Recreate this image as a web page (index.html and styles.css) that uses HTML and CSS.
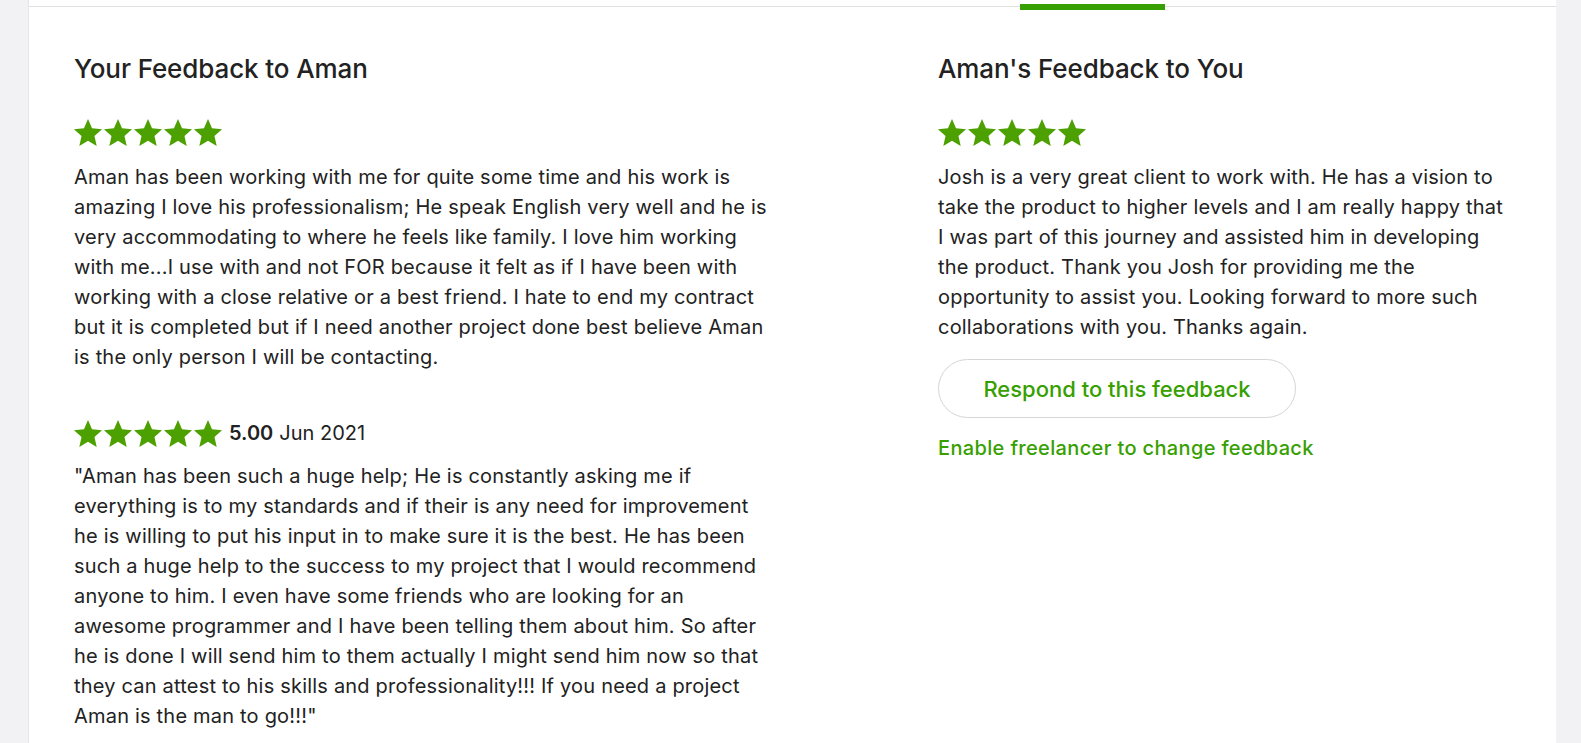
FILE: index.html
```html
<!DOCTYPE html>
<html lang="en">
<head>
<meta charset="utf-8">
<title>Feedback</title>
<link rel="stylesheet" href="styles.css">
</head>
<body>
<div class="panel">
  <div class="tabs"><div class="tab-active"></div></div>
  <div class="columns">
    <section class="col col-left">
      <h2 class="title">Your Feedback to Aman</h2>
      <div class="stars stars-top">
        <svg viewBox="1.2 1.5 21.6 20.5" preserveAspectRatio="none"><polygon points="12,1.5 15.1,8.6 22.8,9.3 17,14.4 18.7,22 12,18 5.3,22 7,14.4 1.2,9.3 8.9,8.6"/></svg>
        <svg viewBox="1.2 1.5 21.6 20.5" preserveAspectRatio="none"><polygon points="12,1.5 15.1,8.6 22.8,9.3 17,14.4 18.7,22 12,18 5.3,22 7,14.4 1.2,9.3 8.9,8.6"/></svg>
        <svg viewBox="1.2 1.5 21.6 20.5" preserveAspectRatio="none"><polygon points="12,1.5 15.1,8.6 22.8,9.3 17,14.4 18.7,22 12,18 5.3,22 7,14.4 1.2,9.3 8.9,8.6"/></svg>
        <svg viewBox="1.2 1.5 21.6 20.5" preserveAspectRatio="none"><polygon points="12,1.5 15.1,8.6 22.8,9.3 17,14.4 18.7,22 12,18 5.3,22 7,14.4 1.2,9.3 8.9,8.6"/></svg>
        <svg viewBox="1.2 1.5 21.6 20.5" preserveAspectRatio="none"><polygon points="12,1.5 15.1,8.6 22.8,9.3 17,14.4 18.7,22 12,18 5.3,22 7,14.4 1.2,9.3 8.9,8.6"/></svg>
      </div>
      <p class="text text-left">Aman has been working with me for quite some time and his work is amazing I love his professionalism; He speak English very well and he is very accommodating to where he feels like family. I love him working with&nbsp;me...I use with and not FOR because it felt as if I have been with working with a close relative or a best friend. I hate to end my contract but it is completed but if I need another project done best believe Aman is&nbsp;the only person I will be contacting.</p>
      <div class="rating-row">
        <div class="stars">
          <svg viewBox="1.2 1.5 21.6 20.5" preserveAspectRatio="none"><polygon points="12,1.5 15.1,8.6 22.8,9.3 17,14.4 18.7,22 12,18 5.3,22 7,14.4 1.2,9.3 8.9,8.6"/></svg>
          <svg viewBox="1.2 1.5 21.6 20.5" preserveAspectRatio="none"><polygon points="12,1.5 15.1,8.6 22.8,9.3 17,14.4 18.7,22 12,18 5.3,22 7,14.4 1.2,9.3 8.9,8.6"/></svg>
          <svg viewBox="1.2 1.5 21.6 20.5" preserveAspectRatio="none"><polygon points="12,1.5 15.1,8.6 22.8,9.3 17,14.4 18.7,22 12,18 5.3,22 7,14.4 1.2,9.3 8.9,8.6"/></svg>
          <svg viewBox="1.2 1.5 21.6 20.5" preserveAspectRatio="none"><polygon points="12,1.5 15.1,8.6 22.8,9.3 17,14.4 18.7,22 12,18 5.3,22 7,14.4 1.2,9.3 8.9,8.6"/></svg>
          <svg viewBox="1.2 1.5 21.6 20.5" preserveAspectRatio="none"><polygon points="12,1.5 15.1,8.6 22.8,9.3 17,14.4 18.7,22 12,18 5.3,22 7,14.4 1.2,9.3 8.9,8.6"/></svg>
        </div>
        <span class="score">5.00</span>
        <span class="date">Jun 2021</span>
      </div>
      <p class="text text-left quote">"Aman has been such a huge help; He is constantly asking me if everything is to my standards and if their is any need for improvement he&nbsp;is willing to put his input in to make sure it is the best. He has been such a huge help to the success to my project that I would recommend anyone to him. I even have some friends who are looking for an awesome&nbsp;programmer and I have been telling them about him. So after he&nbsp;is done I will send him to them actually I might send him now so that they can attest to his skills and professionality!!! If you need a project Aman is the man to go!!!"</p>
    </section>
    <section class="col col-right">
      <h2 class="title">Aman's Feedback to You</h2>
      <div class="stars stars-top">
        <svg viewBox="1.2 1.5 21.6 20.5" preserveAspectRatio="none"><polygon points="12,1.5 15.1,8.6 22.8,9.3 17,14.4 18.7,22 12,18 5.3,22 7,14.4 1.2,9.3 8.9,8.6"/></svg>
        <svg viewBox="1.2 1.5 21.6 20.5" preserveAspectRatio="none"><polygon points="12,1.5 15.1,8.6 22.8,9.3 17,14.4 18.7,22 12,18 5.3,22 7,14.4 1.2,9.3 8.9,8.6"/></svg>
        <svg viewBox="1.2 1.5 21.6 20.5" preserveAspectRatio="none"><polygon points="12,1.5 15.1,8.6 22.8,9.3 17,14.4 18.7,22 12,18 5.3,22 7,14.4 1.2,9.3 8.9,8.6"/></svg>
        <svg viewBox="1.2 1.5 21.6 20.5" preserveAspectRatio="none"><polygon points="12,1.5 15.1,8.6 22.8,9.3 17,14.4 18.7,22 12,18 5.3,22 7,14.4 1.2,9.3 8.9,8.6"/></svg>
        <svg viewBox="1.2 1.5 21.6 20.5" preserveAspectRatio="none"><polygon points="12,1.5 15.1,8.6 22.8,9.3 17,14.4 18.7,22 12,18 5.3,22 7,14.4 1.2,9.3 8.9,8.6"/></svg>
      </div>
      <p class="text text-right">Josh is a very great client to work with. He has a vision to take the product to higher levels and I am really happy that I was part of this journey and assisted him in developing the product. Thank you Josh for providing me the opportunity to assist you. Looking forward to more such collaborations with you. Thanks again.</p>
      <button class="btn" type="button">Respond to this feedback</button>
      <a class="link" href="#">Enable freelancer to change feedback</a>
    </section>
  </div>
</div>
</body>
</html>
```

FILE: styles.css
```css
* { box-sizing: border-box; }
html, body { margin: 0; padding: 0; }
body {
  background: #f2f2f4;
  font-family: Inter, "Liberation Sans", Arial, sans-serif;
  color: #222222;
  height: 743px;
  overflow: hidden;
}
.panel {
  margin-left: 28px;
  width: 1528px;
  min-height: 743px;
  background: #ffffff;
  border-left: 1px solid #e4e5e7;
}
.tabs {
  display: flex;
  height: 7px;
  border-bottom: 1px solid #e0e0e0;
}
.tab-active {
  margin-left: 991px;
  margin-top: 4px;
  width: 145px;
  height: 6px;
  flex: none;
  background: #37a000;
}
.columns {
  display: flex;
  padding: 46px 46px 0 45px;
}
.col-left { width: 864px; flex: none; }
.col-right { width: 572px; flex: none; }
.title {
  margin: 0;
  font-size: 26px;
  line-height: 32px;
  font-weight: 500;
  letter-spacing: -0.1px;
}
.stars { display: flex; gap: 2px; }
.stars svg { width: 28px; height: 27px; fill: #4ca000; display: block; }
.stars-top { margin-top: 34px; }
.text {
  margin: 16px 0 0;
  font-size: 20px;
  line-height: 30px;
  letter-spacing: 0.2px;
}
.text-left { max-width: 708px; }
.text-right { max-width: 566px; }
.rating-row {
  display: flex;
  align-items: center;
  margin-top: 47px;
  font-size: 20px;
  line-height: 28px;
}
.score { font-weight: 600; margin-left: 7px; }
.date { margin-left: 6px; }
.quote { margin-top: 14px; }
.btn {
  display: flex;
  align-items: center;
  justify-content: center;
  margin-top: 17px;
  width: 358px;
  height: 59px;
  border: 1px solid #d5d5d5;
  border-radius: 30px;
  background: #ffffff;
  color: #37a000;
  font-family: inherit;
  font-size: 22px;
  font-weight: 500;
  cursor: pointer;
}
.link {
  display: block;
  margin-top: 15px;
  color: #37a000;
  font-size: 20px;
  line-height: 30px;
  font-weight: 500;
  letter-spacing: 0.35px;
  text-decoration: none;
}
```
